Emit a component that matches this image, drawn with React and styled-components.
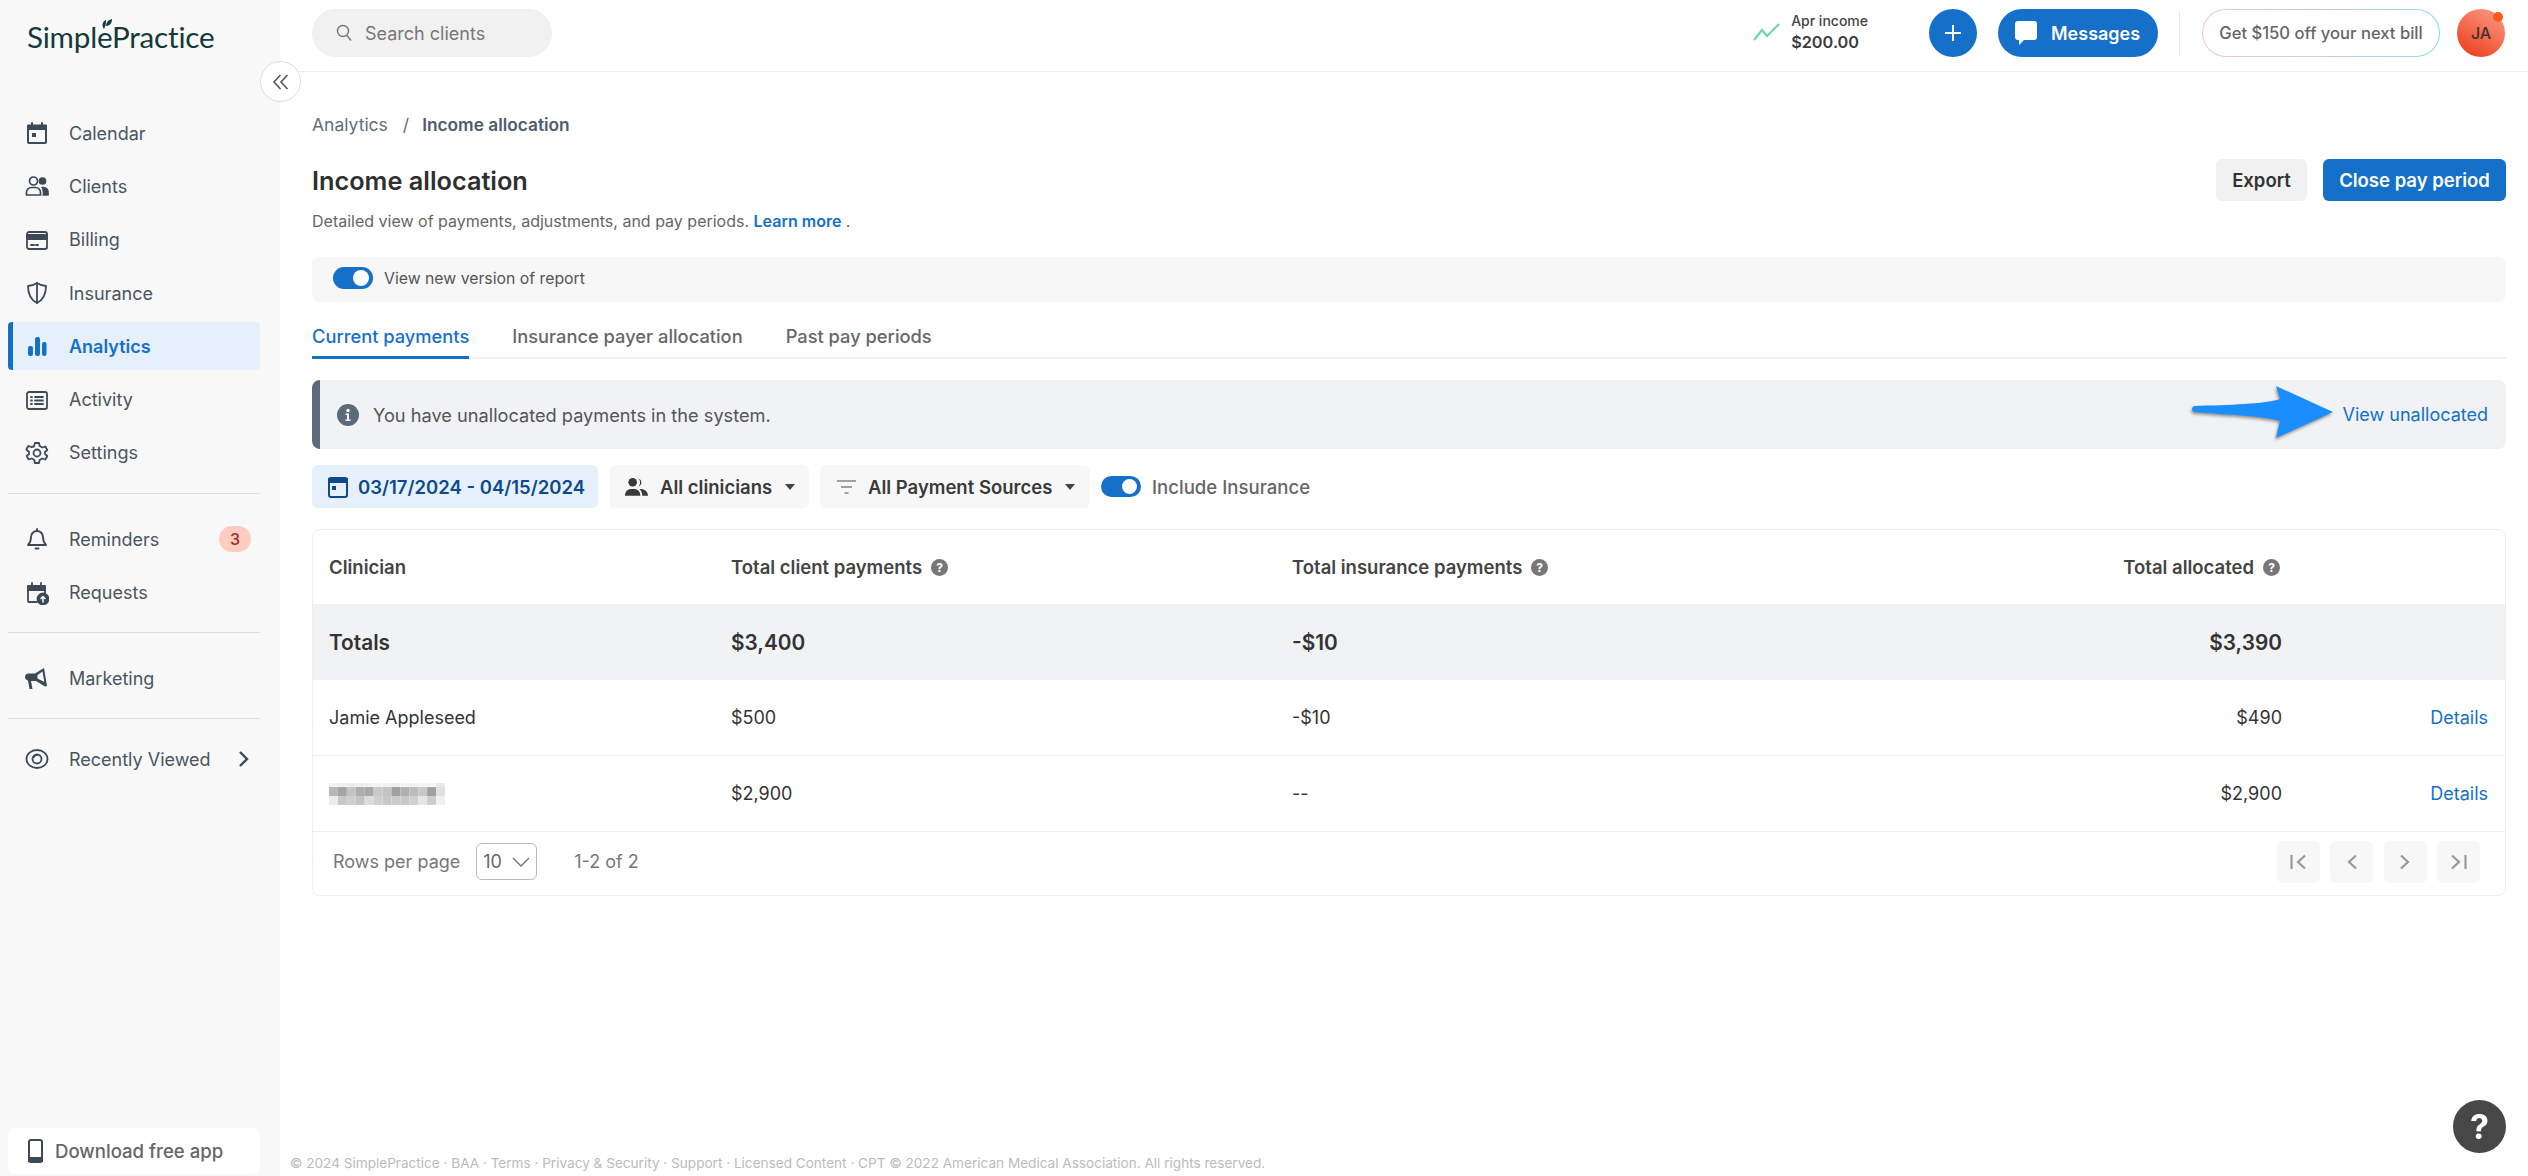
import React from 'react';
import styled, { createGlobalStyle } from 'styled-components';

const Global = createGlobalStyle`
  html, body { margin: 0; padding: 0; height: 100%; background: #fff; }
  body { font-family: Inter, "Liberation Sans", sans-serif; color: #333; -webkit-font-smoothing: antialiased; }
  * { box-sizing: border-box; }
`;

const Shell = styled.div`display: flex; height: 1176px; width: 2528px; overflow: hidden; position: relative;`;
const Sidebar = styled.aside`width: 280px; flex: none; background: #f8f8f8; display: flex; flex-direction: column; position: relative;`;
const LogoWrap = styled.div`height: 70px; padding: 15px 0 0 27px; position: relative;`;
const LogoText = styled.span`font-family: Lato, sans-serif; font-size: 29.6px; letter-spacing: -0.2px; color: #143a3a; line-height: 44px; display: block;`;
const Leaf = styled.svg`position: absolute; left: 101px; top: 19px;`;
const Collapse = styled.button`position: absolute; left: 260px; top: 61px; width: 41px; height: 41px; border-radius: 50%; background: #fff; border: 1px solid #ddd; display: flex; align-items: center; justify-content: center; padding: 0; z-index: 3; color: #555;`;
const Nav = styled.nav`margin-top: 36.500px; display: flex; flex-direction: column; padding: 0 20px 0 8px; flex: 1;`;
const NavItem = styled.div`
  height: 53.3px; display: flex; align-items: center; position: relative; padding-left: 17px;
  font-size: 18px; color: ${p => p.$active ? '#1470c8' : '#4a5560'}; font-weight: ${p => p.$active ? 600 : 400};
  svg { flex: none; color: ${p => p.$active ? '#1470c8' : '#3d4a55'}; }
`;
const ActiveBg = styled.div`
  position: absolute; left: 0; right: 0; top: 2px; bottom: 3px; background: #e6f0fa; border-left: 5px solid #1470c8; border-radius: 4px; z-index: 0;
`;
const NavContent = styled.span`display: flex; align-items: center; gap: 20px; position: relative; z-index: 1; flex: 1;`;
const Badge = styled.span`margin-left: auto; margin-right: 9px; width: 32px; height: 26px; border-radius: 13px; background: #ffccc2; color: #9b2c1e; font-size: 16px; font-weight: 500; display: flex; align-items: center; justify-content: center;`;
const Divider = styled.div`height: 1px; background: #ddd; margin: ${p => p.$m || '13px 0'};`;
const Chev = styled.span`margin-left: auto; margin-right: 9px; display: flex; color: #3d4a55;`;
const Download = styled.div`
  position: absolute; left: 8px; bottom: 2px; width: 252px; height: 46px; background: #fff; border-radius: 6px; display: flex; align-items: center; gap: 12px; padding-left: 20px;
  font-size: 18.6px; font-weight: 500; color: #666; svg { color: #3d4a55; }
`;
const Main = styled.main`flex: 1; display: flex; flex-direction: column; min-width: 0;`;
const Topbar = styled.header`height: 72px; border-bottom: 1px solid #eee; flex: none; display: flex; align-items: center; padding: 0 23px 5px 32px;`;
const Search = styled.div`width: 240px; height: 48px; border-radius: 24px; background: #f1f1f1; display: flex; align-items: center; padding-left: 24px; gap: 13px; font-size: 18px; color: #777;`;
const Income = styled.div`margin-left: auto; display: flex; align-items: center; gap: 11px; margin: 0 61px 3px auto;`;
const IncomeLabel = styled.div`font-size: 14px; font-weight: 500; color: #444; line-height: 20px;`;
const IncomeValue = styled.div`font-size: 16.3px; font-weight: 600; color: #3c3c3c; line-height: 22px;`;
const Plus = styled.button`width: 48px; height: 48px; border-radius: 50%; border: 0; padding: 0; background: #1470c8; color: #fff; display: flex; align-items: center; justify-content: center; margin-right: 21px;`;
const Messages = styled.button`width: 160px; height: 48px; border-radius: 24px; border: 0; background: #1470c8; color: #fff; font: 600 18px Inter, sans-serif; display: flex; align-items: center; padding: 0 0 0 17px; gap: 14px;`;
const VLine = styled.div`width: 1px; height: 44px; background: #e8e8e8; margin: 0 22px 0 21px;`;
const Promo = styled.div`
  width: 238px; height: 48px; border-radius: 24px; display: flex; align-items: center; justify-content: center; font-size: 16.6px; font-weight: 500; color: #666;
  border: 1.5px solid transparent; background: linear-gradient(#fff, #fff) padding-box, linear-gradient(90deg, #f9c6c6, #c5cfe0 50%, #8ed8f0) border-box; margin-right: 17px;
`;
const Avatar = styled.div`width: 48px; height: 48px; border-radius: 50%; background: linear-gradient(30deg, #ec4220 10%, #f98b72 80%); color: #40332f; font-size: 16px; font-weight: 500; display: flex; align-items: center; justify-content: center; position: relative;`;
const Dot = styled.span`position: absolute; right: 2px; top: 3px; width: 10px; height: 10px; border-radius: 50%; background: #ff5a1f;`;
const Content = styled.div`flex: 1; padding: 0 22px 0 32px; display: flex; flex-direction: column; position: relative;`;
const Crumbs = styled.div`margin-top: 41px; display: flex; font-size: 17.5px; line-height: 24px; color: #5f6f7d; align-items: center;`;
const CrumbSep = styled.span`margin: 0 13px 0 15px;`;
const CrumbCurrent = styled.span`font-weight: 600; color: #4d5c6a; font-size: 17.3px;`;
const TitleRow = styled.div`display: flex; align-items: flex-start; margin-top: 21px; justify-content: space-between; height: 48px;`;
const Title = styled.h1`margin: 0; font-size: 25.3px; font-weight: 600; line-height: 46px; color: #2f2f2f;`;
const Actions = styled.div`display: flex; gap: 16px; margin-top: 1px;`;
const Btn = styled.button`height: 42px; width: ${p => p.$w}px; padding: 0; border: 0; border-radius: 6px; font: 600 18.5px Inter, sans-serif; background: ${p => p.$primary ? '#1470c8' : '#f1f1f1'}; color: ${p => p.$primary ? '#fff' : '#333'};`;
const Sub = styled.p`margin: 3px 0 0; font-size: 16px; line-height: 24px; color: #666;`;
const Learn = styled.a`color: #1470c8; font-weight: 600;`;
const ToggleBar = styled.div`margin-top: 24px; height: 45px; border-radius: 8px; background: #f7f7f7; display: flex; align-items: center; padding: 0 0 3px 21px; gap: 11px; font-size: 15.8px; color: #555;`;
const Toggle = styled.span`width: 40px; height: ${p => p.$h || 22}px; border-radius: 11px; background: #1470c8; position: relative; display: inline-block; flex: none;`;
const Knob = styled.span`position: absolute; right: 4px; top: 3px; bottom: 3px; aspect-ratio: 1; border-radius: 50%; background: #fff;`;
const Tabs = styled.div`margin-top: 18px; height: 39px; display: flex; gap: 43px; border-bottom: 2px solid #f1f1f1; font-size: 18.3px; font-weight: 500; color: #666;`;
const Tab = styled.div`
  height: 39px; padding-top: 4px; line-height: 24px;
  ${p => p.$active && 'color: #1470c8; border-bottom: 3px solid #1470c8;'}
`;
const Alert = styled.div`margin-top: 21px; height: 69px; background: #f1f2f4; border-left: 8px solid #5b6b7a; border-radius: 8px; display: flex; align-items: center; padding: 0 18px 0 17px; gap: 14px; font-size: 18.2px; color: #555; position: relative;`;
const AlertLink = styled.a`margin-left: auto; color: #1470c8; font-size: 18px; font-weight: 400;`;
const ArrowSvg = styled.svg`position: absolute; left: 1870px; top: 3px; filter: drop-shadow(-1px 2px 1.5px rgba(0,0,0,.4));`;
const Filters = styled.div`margin-top: 16px; display: flex; align-items: center; gap: 11px; height: 43px;`;
const Chip = styled.div`height: 43px; width: ${p => p.$w}px; flex: none; border-radius: 6px; display: flex; align-items: center; padding: ${p => p.$pad}; gap: ${p => p.$gap || 11}px; font-size: 18.5px; font-weight: 600; background: ${p => p.$blue ? '#e6f0fa' : '#f7f7f7'}; color: ${p => p.$blue ? '#0d4a8c' : '#3a3a3a'};`;
const Caret = styled.span`width: 0; height: 0; border-left: 5px solid transparent; border-right: 5px solid transparent; border-top: 6px solid #444; margin-left: 1px;`;
const IncludeLabel = styled.span`font-size: 18.6px; font-weight: 500; color: #666;`;
const ToggleGroup = styled.div`display: flex; align-items: center; gap: 11px;`;
const Card = styled.section`margin-top: 21px; height: 367px; border: 1px solid #eee; border-radius: 8px; display: flex; flex-direction: column; overflow: hidden;`;
const Row = styled.div`
  display: grid; grid-template-columns: 402px 561px 500px 490px 1fr; align-items: center; padding-left: 16px; height: ${p => p.$h}px; flex: none;
  font-size: ${p => p.$total ? 20.8 : p.$head ? 18.5 : 18}px; font-weight: ${p => (p.$total || p.$head) ? 600 : 400};
  color: ${p => p.$head ? '#444' : '#333'}; ${p => p.$total && 'background: #f1f2f4;'}
  ${p => p.$line && 'border-top: 1px solid #eee;'}
`;
const Cell = styled.div`display: flex; align-items: center; gap: 9px;`;
const HeadRight = styled(Cell)`justify-content: flex-end; padding-right: 2px;`;
const Amount = styled.div`text-align: right;`;
const DetailLink = styled.a`color: #1470c8; justify-self: end; margin-right: 17px; font-weight: 400;`;
const Pager = styled.div`height: 64px; border-top: 1px solid #eee; display: flex; align-items: center; padding: 0 25px 4px 20px; font-size: 18px; color: #777;`;
const Select = styled.div`width: 61px; height: 37px; border: 1px solid #bbb; border-radius: 6px; display: flex; align-items: center; justify-content: space-between; padding: 0 6px; margin: 0 37px 0 16px; color: #666;`;
const PagerBtns = styled.div`margin-left: auto; display: flex; gap: 10.5px;`;
const PageBtn = styled.div`width: 43px; height: 42px; border-radius: 6px; background: #f7f7f7; display: flex; align-items: center; justify-content: center; color: #999;`;
const Footer = styled.footer`position: absolute; left: 10px; bottom: 3px; font-size: 13.58px; line-height: 20px; color: #bbb; white-space: nowrap;`;
const Help = styled.button`position: fixed; right: 22px; bottom: 23px; width: 53px; height: 53px; border-radius: 50%; border: 0; background: #474747; color: #fff; font: 700 34px Inter, sans-serif; display: flex; align-items: center; justify-content: center; padding: 0;`;

const I = ({ children, s = 24, sw = 2, ...r }) => (
  <svg width={s} height={s} viewBox="0 0 24 24" fill="none" stroke="currentColor" strokeWidth={sw} strokeLinecap="round" strokeLinejoin="round" {...r}>{children}</svg>
);
const CalendarI = () => (<I><path d="M4 6h16a1 1 0 0 1 1 1v14a1 1 0 0 1-1 1H4a1 1 0 0 1-1-1V7a1 1 0 0 1 1-1z" /><path d="M3 4.500h18V8H3z" fill="currentColor" /><path d="M7 2v3M17 2v3" /><rect x="7" y="12" width="4" height="4" fill="currentColor" stroke="none" /></I>);
const ClientsI = () => (<I sw={1.7}><circle cx="8.500" cy="7" r="4" /><path d="M1.500 21v-2.500a5 5 0 0 1 5-5h4a5 5 0 0 1 5 5V21z" /><circle cx="17.500" cy="7" r="3" fill="currentColor" /><path d="M17 13.500h1.500a4.500 4.500 0 0 1 4.500 4.500v3h-5" fill="currentColor" /></I>);
const BillingI = () => (<I sw={1.8}><rect x="2" y="4" width="20" height="17" rx="2" /><path d="M2 7h20v4H2z" fill="currentColor" /><path d="M6 17h3M11 17h2" /></I>);
const ShieldI = () => (<I sw={1.8}><path d="M12 2c3 2 6 3 9 3 0 8-3 14-9 17C6 19 3 13 3 5c3 0 6-1 9-3z" /><path d="M12 2v20" /></I>);
const BarsI = () => (<svg width="24" height="24" viewBox="0 0 24 24" fill="currentColor"><rect x="3" y="12" width="5" height="10" rx="2" /><rect x="10" y="3" width="5" height="19" rx="2" /><rect x="17" y="8" width="4.500" height="14" rx="2" /></svg>);
const ActivityI = () => (<I sw={1.8}><rect x="2" y="4" width="20" height="17" rx="2" /><path d="M6 9h1M6 12.500h1M6 16h1M10 9h8M10 12.500h8M10 16h8" /></I>);
const GearI = () => (<I sw={1.8}><circle cx="12" cy="12" r="3.500" /><path d="M10 2h4l.7 3 2.600 1.500 3-1 2 3.500-2.300 2v2l2.300 2-2 3.500-3-1-2.600 1.500-.7 3h-4l-.7-3-2.600-1.500-3 1-2-3.500 2.300-2v-2L1.300 8.500l2-3.500 3 1L8.900 5.500z" /></I>);
const BellI = () => (<I sw={1.8}><path d="M12 2v2M6 10a6 6 0 0 1 12 0c0 5 2 7 3 8H3c1-1 3-3 3-8zM10.500 21.500h3" /></I>);
const RequestsI = () => (<I sw={1.8}><path d="M12 21H4a1 1 0 0 1-1-1V7a1 1 0 0 1 1-1h15a1 1 0 0 1 1 1v5" /><path d="M3 5h17v4H3z" fill="currentColor" /><path d="M7 2v3M16 2v3" /><circle cx="18" cy="18" r="5.500" fill="currentColor" /><path d="M18 21v-5.500M16 17.500l2-2 2 2" stroke="#fff" strokeWidth="1.500" /></I>);
const MegaI = () => (<svg width="24" height="24" viewBox="0 0 24 24" fill="currentColor"><path d="M19 1l3 18-2 .5-9-5.500H6l1.500 8h-3L3 13.500C1 13 0 11.500 0 10c0-2 1.500-3.500 3.500-3.500H10z" /><path d="M12.500 8l5-3.500 1.800 10.500-6.800-3.500z" fill="#f8f8f8" /></svg>);
const EyeI = () => (<I sw={1.8}><ellipse cx="12" cy="12" rx="10.500" ry="9" /><circle cx="12" cy="12" r="4.500" /><path d="M9 10a3 3 0 0 1 3-2" /></I>);

const items1 = [['Calendar', CalendarI], ['Clients', ClientsI], ['Billing', BillingI], ['Insurance', ShieldI], ['Analytics', BarsI, true], ['Activity', ActivityI], ['Settings', GearI]];

const Item = ({ label, Icon, active, extra }) => (
  <NavItem $active={active}>
    {active && <ActiveBg />}
    <NavContent><Icon /><span>{label}</span>{extra}</NavContent>
  </NavItem>
);

const mosaic = [
  '#f1f1f1 #f0f0f0 #ededed #efefef #f1f1f1 #f4f4f4 #f2f2f2 #f0f0f0 #f4f4f4 #f1f1f1 #f4f4f4 #f4f4f4 #e8e8e8',
  '#b8b8b8 #a5a5a5 #c4c4c4 #adadad #a8a8a8 #c8c8c8 #c4c4c4 #a0a0a0 #b0b0b0 #bcbcbc #c8c8c8 #a0a0a0 #e0e0e0',
  '#ececec #c8c8c8 #cfcfcf #c4c4c4 #dcdcdc #cfcfcf #c8c8c8 #cbcbcb #c8c8c8 #d0d0d0 #e4e4e4 #cccccc #f0f0f0'
];
const Mosaic = () => (
  <svg width="116" height="22" viewBox="0 0 117 22">
    {mosaic.map((r, y) => r.split(' ').map((c, x) => (
      <rect key={`${x}-${y}`} x={x * 9} y={[0, 4, 13][y]} width="9" height={[4, 9, 9][y]} fill={c} />
    )))}
  </svg>
);
const Q = () => (
  <svg width="17" height="17" viewBox="0 0 17 17"><circle cx="8.500" cy="8.500" r="8.500" fill="#777" /><text x="8.500" y="13" textAnchor="middle" fontSize="12" fontWeight="700" fontFamily="Inter" fill="#fff">?</text></svg>
);

export default function App() {
  return (
    <Shell>
      <Global />
      <Sidebar>
        <LogoWrap>
          <LogoText>SimplePractice</LogoText>
          <Leaf width="11" height="10" viewBox="0 0 11 10"><path d="M3 10C0 6 2 2 5 1c0 3 0 5-2 9zM5 7C5 4 7 1 11 0c0 4-2 7-6 7z" fill="#143a3a" /></Leaf>
        </LogoWrap>
        <Collapse aria-label="Collapse">
          <svg width="18" height="18" viewBox="0 0 18 18" fill="none" stroke="currentColor" strokeWidth="1.600"><path d="M8.500 2L2 9l6.500 7M15.500 2L9 9l6.500 7" /></svg>
        </Collapse>
        <Nav>
          {items1.map(([l, Ic, a]) => <Item key={l} label={l} Icon={Ic} active={a} />)}
          <Divider $m="13px 0 19px" />
          <Item label="Reminders" Icon={BellI} extra={<Badge>3</Badge>} />
          <Item label="Requests" Icon={RequestsI} />
          <Divider $m="13px 0 19px" />
          <Item label="Marketing" Icon={MegaI} />
          <Divider $m="13px 0 13px" />
          <Item label="Recently Viewed" Icon={EyeI} extra={<Chev><svg width="14" height="18" viewBox="0 0 14 18" fill="none" stroke="currentColor" strokeWidth="2.400"><path d="M3 2l7 7-7 7" /></svg></Chev>} />
        </Nav>
        <Download>
          <svg width="15" height="24" viewBox="0 0 15 24" fill="none" stroke="currentColor" strokeWidth="2"><rect x="1" y="1" width="13" height="22" rx="2" /><path d="M1 19h13v3H1z" fill="currentColor" /></svg>
          Download free app
        </Download>
      </Sidebar>
      <Main>
        <Topbar>
          <Search>
            <svg width="16" height="18" viewBox="0 0 16 18" fill="none" stroke="#777" strokeWidth="1.400"><circle cx="7" cy="7" r="5.500" /><path d="M11 11.500l4 5" /></svg>
            Search clients
          </Search>
          <Income>
            <svg width="27" height="18" viewBox="0 0 27 18" fill="none" stroke="#6fd8a8" strokeWidth="2.200"><path d="M1 17l8-10 5 6L26 1" /></svg>
            <div><IncomeLabel>Apr income</IncomeLabel><IncomeValue>$200.00</IncomeValue></div>
          </Income>
          <Plus aria-label="Add"><svg width="18" height="18" viewBox="0 0 18 18" stroke="#fff" strokeWidth="2"><path d="M9 1v16M1 9h16" /></svg></Plus>
          <Messages>
            <svg width="22" height="24" viewBox="0 0 22 24" fill="#fff"><path d="M3 0h16a3 3 0 0 1 3 3v13a3 3 0 0 1-3 3H9l-5 5v-5H3a3 3 0 0 1-3-3V3a3 3 0 0 1 3-3z" /></svg>
            Messages
          </Messages>
          <VLine />
          <Promo>Get $150 off your next bill</Promo>
          <Avatar>JA<Dot /></Avatar>
        </Topbar>
        <Content>
          <Crumbs>Analytics<CrumbSep>/</CrumbSep><CrumbCurrent>Income allocation</CrumbCurrent></Crumbs>
          <TitleRow>
            <Title>Income allocation</Title>
            <Actions><Btn $w={91}>Export</Btn><Btn $w={183} $primary>Close pay period</Btn></Actions>
          </TitleRow>
          <Sub>Detailed view of payments, adjustments, and pay periods. <Learn>Learn more</Learn> .</Sub>
          <ToggleBar><Toggle><Knob /></Toggle>View new version of report</ToggleBar>
          <Tabs>
            <Tab $active>Current payments</Tab>
            <Tab>Insurance payer allocation</Tab>
            <Tab>Past pay periods</Tab>
          </Tabs>
          <Alert>
            <svg width="22" height="22" viewBox="0 0 22 22"><circle cx="11" cy="11" r="11" fill="#5b6b7a" /><circle cx="11" cy="6.500" r="1.700" fill="#fff" /><path d="M8.500 9.500h3.500v6h1.500v1.500h-5v-1.500h1.500v-4.500h-1.500z" fill="#fff" /></svg>
            <span>You have unallocated payments in the system.</span>
            <AlertLink>View unallocated</AlertLink>
            <ArrowSvg width="145" height="60" viewBox="0 0 145 60"><path d="M4 26C40 25 75 24 90 19L86 6 143 32 86 58 90 41C75 36 40 35 4 32Q0 29 4 26Z" fill="#1a8dff" transform="translate(0 -3)" /></ArrowSvg>
          </Alert>
          <Filters>
            <Chip $blue $w={286} $pad="0 0 0 16px" $gap={10}>
              <svg width="20" height="22" viewBox="0 0 20 22" fill="none" stroke="currentColor" strokeWidth="2"><rect x="1" y="2" width="18" height="19" rx="2" /><path d="M1 3h18v3H1z" fill="currentColor" /><rect x="4" y="10" width="4" height="4" fill="currentColor" stroke="none" /></svg>
              03/17/2024 - 04/15/2024
            </Chip>
            <Chip $w={200} $pad="0 0 0 16px" $gap={12}>
              <svg width="23" height="20" viewBox="0 0 24 20" fill="#3a3a3a"><circle cx="8" cy="5" r="4.500" /><path d="M0 19c0-5 3-7 8-7s8 2 8 7z" /><path d="M14 1a4.500 4.500 0 0 1 0 8.500 6 6 0 0 0 0-8.500z" /><path d="M15 12c5 0 9 2 9 7h-6c0-3-1-5-3-7z" /></svg>
              All clinicians<Caret />
            </Chip>
            <Chip $w={270} $pad="0 0 0 17px" $gap={12}>
              <svg width="19" height="14" viewBox="0 0 19 14" stroke="#a0a0a0" strokeWidth="2"><path d="M0 1h19M4 7h11M7.500 13h4" /></svg>
              All Payment Sources<Caret />
            </Chip>
            <ToggleGroup><Toggle $h={21}><Knob /></Toggle><IncludeLabel>Include Insurance</IncludeLabel></ToggleGroup>
          </Filters>
          <Card>
            <Row $head $h={74}>
              <Cell>Clinician</Cell>
              <Cell>Total client payments <Q /></Cell>
              <Cell>Total insurance payments <Q /></Cell>
              <HeadRight>Total allocated <Q /></HeadRight>
            </Row>
            <Row $total $h={76}>
              <Cell>Totals</Cell><Cell>$3,400</Cell><Cell>-$10</Cell>
              <Amount>$3,390</Amount>
            </Row>
            <Row $h={75}>
              <Cell>Jamie Appleseed</Cell><Cell>$500</Cell><Cell>-$10</Cell>
              <Amount>$490</Amount><DetailLink>Details</DetailLink>
            </Row>
            <Row $line $h={76}>
              <Cell><Mosaic /></Cell><Cell>$2,900</Cell><Cell>--</Cell>
              <Amount>$2,900</Amount><DetailLink>Details</DetailLink>
            </Row>
            <Pager>
              Rows per page
              <Select>10<svg width="18" height="10" viewBox="0 0 18 10" fill="none" stroke="#777" strokeWidth="1.400"><path d="M1 1l8 8 8-8" /></svg></Select>
              1-2 of 2
              <PagerBtns>
                <PageBtn><svg width="16" height="16" viewBox="0 0 16 16" fill="none" stroke="currentColor" strokeWidth="2.200"><path d="M1.500 1v14M15 1.500L8 8l7 6.500" /></svg></PageBtn>
                <PageBtn><svg width="10" height="16" viewBox="0 0 10 16" fill="none" stroke="currentColor" strokeWidth="2.200"><path d="M9 1.500L2 8l7 6.500" /></svg></PageBtn>
                <PageBtn><svg width="10" height="16" viewBox="0 0 10 16" fill="none" stroke="currentColor" strokeWidth="2.200"><path d="M1 1.500L8 8l-7 6.500" /></svg></PageBtn>
                <PageBtn><svg width="16" height="16" viewBox="0 0 16 16" fill="none" stroke="currentColor" strokeWidth="2.200"><path d="M14.500 1v14M1 1.500L8 8l-7 6.500" /></svg></PageBtn>
              </PagerBtns>
            </Pager>
          </Card>
          <Footer>© 2024 SimplePractice · BAA · Terms · Privacy &amp; Security · Support · Licensed Content · CPT © 2022 American Medical Association. All rights reserved.</Footer>
        </Content>
      </Main>
      <Help aria-label="Help">?</Help>
    </Shell>
  );
}
